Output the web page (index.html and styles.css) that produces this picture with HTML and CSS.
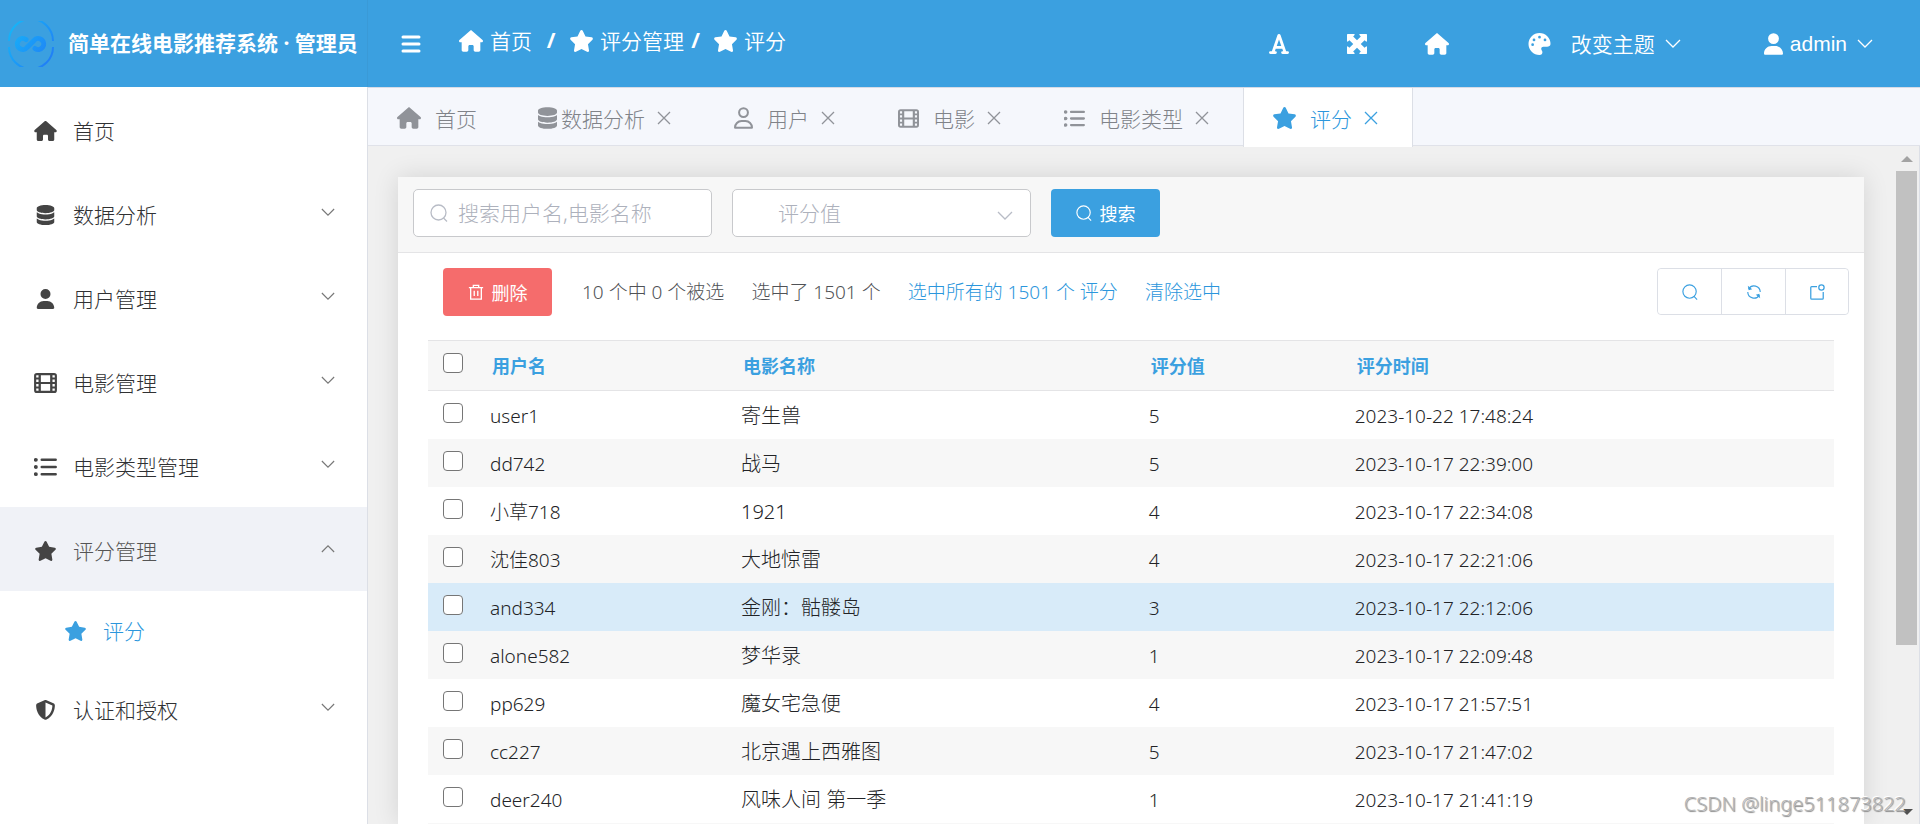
FILE: index.html
```html
<!DOCTYPE html>
<html lang="zh-CN">
<head>
<meta charset="utf-8">
<title>评分 | 简单在线电影推荐系统 · 管理员</title>
<link rel="stylesheet" href="styles.css">
</head>
<body>
<svg class="sprite" aria-hidden="true">
  <symbol id="house" viewBox="0 0 576 512"><path d="M575.8 255.5c0 18-15 32.1-32 32.1h-32l.7 160.2V472c0 22.1-17.9 40-40 40H392c-22.1 0-40-17.9-40-40V384c0-17.700-14.300-32-32-32H256c-17.700 0-32 14.300-32 32v88c0 22.100-17.900 40-40 40H104c-22.100 0-40-17.900-40-40V287.600H32c-18 0-32-14-32-32.100c0-9 3-17 10-24L266.400 8c7-7 15-8 22-8s15 2 21 7L564.800 231.500c8 7 12 15 11 24z"/></symbol>
  <symbol id="star" viewBox="24 0 528 512"><path d="M316.900 18C311.600 7 300.400 0 288.100 0s-23.400 7-28.800 18L195 150.300 51.400 171.500c-12 1.800-22 10.200-25.700 21.700s-.7 24.200 7.900 32.700L137.800 329 113.200 474.700c-2 12 3 24.200 12.900 31.300s23 8 33.800 2.300l128.300-68.500 128.300 68.500c10.800 5.700 23.900 4.900 33.800-2.300s14.900-19.300 12.900-31.300L438.500 329 542.700 225.900c8.600-8.500 11.700-21.200 7.900-32.700s-13.700-19.900-25.700-21.700L381.200 150.300 316.900 18z"/></symbol>
  <symbol id="database" viewBox="0 0 448 512"><path d="M448 80v48c0 44.200-100.300 80-224 80S0 172.200 0 128V80C0 35.800 100.300 0 224 0S448 35.800 448 80zM393.200 214.700c20.800-7.400 39.900-16.900 54.800-28.600V288c0 44.200-100.300 80-224 80S0 332.200 0 288V186.100c14.900 11.800 34 21.200 54.800 28.600C99.700 230.700 159.500 240 224 240s124.300-9.300 169.200-25.300zM0 346.100c14.900 11.800 34 21.200 54.800 28.600C99.700 390.700 159.500 400 224 400s124.300-9.300 169.200-25.300c20.800-7.400 39.900-16.900 54.800-28.600V432c0 44.200-100.300 80-224 80S0 476.200 0 432V346.100z"/></symbol>
  <symbol id="user" viewBox="0 0 448 512"><path d="M224 256A128 128 0 1 0 224 0a128 128 0 1 0 0 256zm-45.700 48C79.800 304 0 383.800 0 482.300C0 498.700 13.300 512 29.700 512H418.300c16.400 0 29.700-13.300 29.700-29.700C448 383.800 368.200 304 269.700 304H178.300z"/></symbol>
  <symbol id="user-line" viewBox="0 0 448 512"><g fill="none" stroke="currentColor" stroke-width="48"><circle cx="224" cy="128" r="104"/><path d="M24 482c0-86 68-154 154-154h92c86 0 154 68 154 154q0 6-6 6H30q-6 0-6-6z"/></g></symbol>
  <symbol id="film" viewBox="0 32 512 448"><path fill-rule="evenodd" d="M64 32h384a64 64 0 0 1 64 64v320a64 64 0 0 1-64 64H64a64 64 0 0 1-64-64V96a64 64 0 0 1 64-64zM48 88v44h52V80H56zM48 176v56h52v-56zM48 280v56h52v-56zM48 380v44l8 8h44v-52zM412 80v52h52V88l-8-8zM412 176v56h52v-56zM412 280v56h52v-56zM412 380v52h44l8-8v-44zM152 80v152h208V80zM152 280v152h208V280z"/></symbol>
  <symbol id="list" viewBox="0 32 512 448"><circle cx="40" cy="96" r="44"/><circle cx="40" cy="256" r="44"/><circle cx="40" cy="416" r="44"/><path stroke="currentColor" stroke-width="56" stroke-linecap="round" d="M172 96h312M172 256h312M172 416h312"/></symbol>
  <symbol id="shield" viewBox="0 0 512 512"><path fill-rule="evenodd" d="M269 3L457 82c22 9 39 31 39 58c-1 99-42 280-214 362q-26 12-52 0C58 420 17 239 16 140c0-27 17-49 39-58L243 3q13-5 26 0zM256 66v380c138-67 175-214 176-305z"/></symbol>
  <symbol id="font" viewBox="0 0 448 448"><path fill-rule="evenodd" d="M190 20q7-20 34-20t34 20l126 364h32a32 32 0 0 1 0 64H304a32 32 0 0 1 0-64h12l-18-52H150l-18 52h12a32 32 0 0 1 0 64H32a32 32 0 0 1 0-64h32zM173 268h102L224 122z"/></symbol>
  <symbol id="expand" viewBox="0 0 448 448"><path d="M16 0h142q22 4 12 22l-32 32 86 86 86-86-32-32q-10-18 12-22h142q16 0 16 16v142q-4 22-22 12l-32-32-86 86 86 86 32-32q18-10 22 12v142q0 16-16 16H290q-22-4-12-22l32-32-86-86-86 86 32 32q10 18-12 22H16q-16 0-16-16V290q4-22 22-12l32 32 86-86-86-86-32 32q-18 10-22-12V16Q0 0 16 0z"/></symbol>
  <symbol id="palette" viewBox="0 0 512 512"><path fill-rule="evenodd" d="M512 256c0 42-38 64-80 64h-88c-26 0-48 22-48 48c0 32 28 48 28 80c0 36-22 64-68 64a256 256 0 1 1 256-256zM128 272a32 32 0 1 0-64 0 32 32 0 1 0 64 0zM160 160a32 32 0 1 0-64 0 32 32 0 1 0 64 0zM288 96a32 32 0 1 0-64 0 32 32 0 1 0 64 0zM416 160a32 32 0 1 0-64 0 32 32 0 1 0 64 0z"/></symbol>
  <symbol id="bars" viewBox="0 0 20 18"><path stroke="currentColor" stroke-width="3" stroke-linecap="round" d="M2 2h16M2 9h16M2 16h16"/></symbol>
  <symbol id="down" viewBox="0 0 16 10"><path fill="none" stroke="currentColor" stroke-width="1.300" d="M1 1l7 7 7-7"/></symbol>
  <symbol id="close" viewBox="0 0 18 18"><path fill="none" stroke="currentColor" stroke-width="1.300" d="M3 3l12 12M15 3L3 15"/></symbol>
  <symbol id="search" viewBox="0 0 18 18"><g fill="none" stroke="currentColor" stroke-width="1.300"><circle cx="8.500" cy="8.500" r="7.500"/><path d="M13.500 14l3.500 3.500"/></g></symbol>
  <symbol id="trash" viewBox="0 0 18 18"><path fill="none" stroke="currentColor" stroke-width="1.500" d="M1 4h16M3 4v13h12V4M6 4V1.500h6V4M7 7.500v6M11 7.500v6"/></symbol>
  <symbol id="refresh" viewBox="0 0 18 18"><path fill="none" stroke="currentColor" stroke-width="1.300" d="M3 5.500A7 7 0 0 1 16 9M2 9a7 7 0 0 0 13 3.500"/><path d="M2 2l1 5 4-1zM16 16l-1-5-4 1z"/></symbol>
  <symbol id="notify" viewBox="0 0 18 18"><g fill="none" stroke="currentColor" stroke-width="1.400"><path d="M9 3H3q-1 0-1 1v12q0 1 1 1h12q1 0 1-1V9"/><circle cx="14" cy="4" r="3"/></g></symbol>
</svg>

<div class="app">
  <header class="header">
    <div class="brand">
      <svg class="logo" viewBox="0 0 46 46" aria-hidden="true">
        <defs><linearGradient id="lg" gradientUnits="userSpaceOnUse" x1="2" y1="8" x2="42" y2="38"><stop offset="0" stop-color="#16b4f8"/><stop offset="1" stop-color="#2080f6"/></linearGradient></defs>
        <g fill="none" stroke="url(#lg)">
          <path stroke-width="2" d="M1 20a22 22 0 0 1 44 0M1 26a22 22 0 0 0 44 0"/>
          <path stroke-width="5" stroke-linecap="round" d="M18 18.500a5.500 5.500 0 1 0 1 8l7-7a5.500 5.500 0 1 1 1 8"/>
        </g>
      </svg>
      <h1 class="brand-name">简单在线电影推荐系统 · 管理员</h1>
    </div>
    <button class="icon-btn menu-btn" type="button" aria-label="菜单"><svg class="i-bars"><use href="#bars"/></svg></button>
    <nav class="crumbs" aria-label="breadcrumb">
      <a href="#"><svg class="i-house"><use href="#house"/></svg><span>首页</span></a>
      <span class="slash wide">/</span>
      <a href="#"><svg class="i-star"><use href="#star"/></svg><span>评分管理</span></a>
      <span class="slash">/</span>
      <a href="#"><svg class="i-star"><use href="#star"/></svg><span>评分</span></a>
    </nav>
    <div class="tools">
      <button class="icon-btn" type="button" aria-label="字体"><svg class="i-sq"><use href="#font"/></svg></button>
      <button class="icon-btn" type="button" aria-label="全屏"><svg class="i-sq"><use href="#expand"/></svg></button>
      <button class="icon-btn" type="button" aria-label="主页"><svg class="i-house"><use href="#house"/></svg></button>
      <button class="icon-btn theme" type="button"><svg class="i-star"><use href="#palette"/></svg><span>改变主题</span><svg class="i-down"><use href="#down"/></svg></button>
      <button class="icon-btn account" type="button"><svg class="i-user"><use href="#user"/></svg><span>admin</span><svg class="i-down"><use href="#down"/></svg></button>
    </div>
  </header>

  <div class="body">
    <nav class="sidebar">
      <a class="item" href="#"><svg class="i-side"><use href="#house"/></svg><span>首页</span></a>
      <a class="item" href="#"><svg class="i-side"><use href="#database"/></svg><span>数据分析</span><svg class="i-caret"><use href="#down"/></svg></a>
      <a class="item" href="#"><svg class="i-side"><use href="#user"/></svg><span>用户管理</span><svg class="i-caret"><use href="#down"/></svg></a>
      <a class="item" href="#"><svg class="i-side"><use href="#film"/></svg><span>电影管理</span><svg class="i-caret"><use href="#down"/></svg></a>
      <a class="item" href="#"><svg class="i-side"><use href="#list"/></svg><span>电影类型管理</span><svg class="i-caret"><use href="#down"/></svg></a>
      <a class="item open" href="#"><svg class="i-side"><use href="#star"/></svg><span>评分管理</span><svg class="i-caret"><use href="#down"/></svg></a>
      <a class="item sub" href="#"><svg class="i-side"><use href="#star"/></svg><span>评分</span></a>
      <a class="item" href="#"><svg class="i-side"><use href="#shield"/></svg><span>认证和授权</span><svg class="i-caret"><use href="#down"/></svg></a>
    </nav>

    <main class="main">
      <div class="tabs">
        <a class="tab" href="#"><svg class="i-house"><use href="#house"/></svg><span>首页</span></a>
        <a class="tab tight" href="#"><svg class="i-user"><use href="#database"/></svg><span>数据分析</span><svg class="i-close"><use href="#close"/></svg></a>
        <a class="tab" href="#"><svg class="i-user"><use href="#user-line"/></svg><span>用户</span><svg class="i-close"><use href="#close"/></svg></a>
        <a class="tab" href="#"><svg class="i-film"><use href="#film"/></svg><span>电影</span><svg class="i-close"><use href="#close"/></svg></a>
        <a class="tab" href="#"><svg class="i-film"><use href="#list"/></svg><span>电影类型</span><svg class="i-close"><use href="#close"/></svg></a>
        <a class="tab active" href="#"><svg class="i-star"><use href="#star"/></svg><span>评分</span><svg class="i-close"><use href="#close"/></svg></a>
      </div>

      <div class="pane">
        <section class="card">
          <form class="filters">
            <label class="field search-field"><svg class="i-search"><use href="#search"/></svg><input type="text" aria-label="搜索" placeholder="搜索用户名,电影名称"></label>
            <label class="field select-field"><select aria-label="评分值"><option>评分值</option></select><svg class="i-down"><use href="#down"/></svg></label>
            <button class="btn primary" type="button"><svg class="i-btn"><use href="#search"/></svg>搜索</button>
          </form>

          <div class="actions">
            <button class="btn danger" type="button"><svg class="i-btn"><use href="#trash"/></svg>删除</button>
            <span>10 个中 0 个被选</span>
            <span>选中了 1501 个</span>
            <a href="#">选中所有的 1501 个 评分</a>
            <a href="#">清除选中</a>
            <div class="group">
              <button type="button" aria-label="搜索"><svg class="i-btn"><use href="#search"/></svg></button>
              <button type="button" aria-label="刷新"><svg class="i-btn"><use href="#refresh"/></svg></button>
              <button type="button" aria-label="打开"><svg class="i-btn"><use href="#notify"/></svg></button>
            </div>
          </div>

          <div class="table-wrap">
            <table>
              <colgroup><col class="c-check"><col class="c-user"><col class="c-movie"><col class="c-score"><col></colgroup>
              <thead><tr><th><input type="checkbox" aria-label="全选"></th><th>用户名</th><th>电影名称</th><th>评分值</th><th>评分时间</th></tr></thead>
              <tbody>
                <tr><td><input type="checkbox" aria-label="user1"></td><td>user1</td><td>寄生兽</td><td>5</td><td>2023-10-22 17:48:24</td></tr>
                <tr><td><input type="checkbox" aria-label="dd742"></td><td>dd742</td><td>战马</td><td>5</td><td>2023-10-17 22:39:00</td></tr>
                <tr><td><input type="checkbox" aria-label="小草718"></td><td>小草718</td><td>1921</td><td>4</td><td>2023-10-17 22:34:08</td></tr>
                <tr><td><input type="checkbox" aria-label="沈佳803"></td><td>沈佳803</td><td>大地惊雷</td><td>4</td><td>2023-10-17 22:21:06</td></tr>
                <tr class="hover"><td><input type="checkbox" aria-label="and334"></td><td>and334</td><td>金刚：骷髅岛</td><td>3</td><td>2023-10-17 22:12:06</td></tr>
                <tr><td><input type="checkbox" aria-label="alone582"></td><td>alone582</td><td>梦华录</td><td>1</td><td>2023-10-17 22:09:48</td></tr>
                <tr><td><input type="checkbox" aria-label="pp629"></td><td>pp629</td><td>魔女宅急便</td><td>4</td><td>2023-10-17 21:57:51</td></tr>
                <tr><td><input type="checkbox" aria-label="cc227"></td><td>cc227</td><td>北京遇上西雅图</td><td>5</td><td>2023-10-17 21:47:02</td></tr>
                <tr><td><input type="checkbox" aria-label="deer240"></td><td>deer240</td><td>风味人间 第一季</td><td>1</td><td>2023-10-17 21:41:19</td></tr>
                <tr><td></td><td></td><td></td><td></td><td></td></tr>
              </tbody>
            </table>
          </div>
        </section>
        <div class="scrollbar" aria-hidden="true">
          <span class="arrow up"></span>
          <span class="thumb"></span>
          <span class="arrow down"></span>
        </div>
      </div>
    </main>
  </div>
  <p class="watermark">CSDN @linge511873822</p>
</div>
</body>
</html>
```
FILE: styles.css
```css
* { box-sizing: border-box; }
body {
  margin: 0;
  font-family: "Noto Sans", "Noto Sans CJK SC", sans-serif;
  font-size: 19px;
  font-weight: 300;
  color: #222326;
}
a { color: inherit; text-decoration: none; }
button, input, select { font: inherit; color: inherit; }
svg { fill: currentColor; flex: none; display: block; }
.sprite { position: absolute; width: 0; height: 0; }

.i-house { width: 24px; height: 22px; }
.i-star { width: 23px; height: 22px; }
.i-user { width: 19px; height: 22px; }
.i-film { width: 21px; height: 19px; }
.i-sq { width: 20px; height: 20px; }
.i-side { width: 23px; height: 20px; }
.i-bars { width: 20px; height: 18px; }
.i-down { width: 16px; height: 10px; }
.i-caret { width: 14px; height: 9px; margin-left: auto; }
.i-close { width: 18px; height: 18px; }
.i-search { width: 18px; height: 18px; }
.i-btn { width: 16px; height: 16px; }

.app { position: relative; height: 100vh; display: flex; flex-direction: column; overflow: hidden; }

.header { display: flex; align-items: center; flex: none; height: 87px; background: #3ba0e0; color: #fff; font-size: 21px; font-weight: 350; }
.brand { width: 368px; height: 100%; flex: none; display: flex; align-items: center; gap: 14px; padding-left: 8px; border-right: 1px solid #3a9ad7; }
.logo { width: 46px; height: 46px; }
.brand-name { margin: 0; padding-bottom: 3px; font-size: 21px; font-weight: 700; white-space: nowrap; }
.icon-btn { display: flex; align-items: center; padding: 0; border: 0; background: none; cursor: pointer; }
.menu-btn { margin: 0 38px 0 33px; }
.crumbs { display: flex; align-items: center; padding-bottom: 6px; }
.crumbs a { display: flex; align-items: center; gap: 7px; }
.crumbs span { padding-bottom: 2px; }
.crumbs .slash { width: 30px; text-align: center; font-weight: 700; padding-right: 7px; }
.crumbs .wide { width: 38px; padding-right: 0; }
.tools { display: flex; align-items: center; margin-left: auto; padding-right: 47px; }
.tools .icon-btn { margin-left: 58px; }
.tools .theme { margin-left: 79px; gap: 10px; }
.theme span { padding: 0 0 2px 10px; }
.tools .account { margin-left: 83px; gap: 10px; font-family: "Liberation Sans", sans-serif; font-weight: 400; }
.account span { margin-left: -3px; }

.body { flex: 1; min-height: 0; display: flex; }
.sidebar { width: 368px; flex: none; background: #fff; border-right: 1px solid #dcdfe6; font-size: 21px; color: #444; }
.item { display: flex; align-items: center; height: 84px; padding: 4px 32px 0 34px; }
.item span { margin-left: 16px; padding-bottom: 2px; color: #303133; }
.item .i-caret { color: #777; margin-bottom: 6px; }
.item.open { background: #f0f2f7; }
.item.open span { color: #555; }
.item.open .i-caret { transform: rotate(180deg); }
.item.sub { height: 75px; padding-left: 64px; color: #3ba0e0; }
.item.sub span { color: #2b96dc; }

.main { flex: 1; min-width: 0; display: flex; flex-direction: column; }
.tabs { flex: none; display: flex; height: 59px; background: #f5f7fc; border-top: 1px solid #d6dbe6; border-bottom: 1px solid #e0e2e9; color: #909399; font-size: 21px; }
.tab { display: flex; align-items: center; padding: 3px 32px 0 29px; }
.tab span { margin-left: 14px; padding-bottom: 1px; color: #808389; }
.tab.tight span { margin-left: 4px; }
.tab .i-close { margin-left: 10px; }
.tab.active { margin-bottom: -2px; padding-bottom: 2px; background: #fff; color: #3ba0e0; border: solid #dcdfe6; border-width: 0 1px; z-index: 1; }
.tab.active span { color: #2b96dc; }

.pane { flex: 1; min-height: 0; display: flex; background: #f0f0f0; padding-left: 30px; border-right: 1px solid #dcdfe6; overflow: hidden; }
.card { flex: 1; min-width: 0; margin: 31px 32px 0 0; background: #fff; box-shadow: 0 0 24px rgba(0, 0, 0, 0.12); }
.filters { display: flex; gap: 20px; height: 76px; padding: 12px 15px; background: #f7f7f7; border-bottom: 1px solid #e4e4e6; font-size: 21px; }
.field { display: flex; align-items: center; width: 299px; height: 48px; background: #fff; border: 1px solid #c8c9cc; border-radius: 5px; color: #b8bcc6; }
.search-field { padding-left: 16px; gap: 10px; }
.field input { flex: 1; min-width: 0; height: 44px; padding: 0; border: 0; background: none; outline: 0; color: #606266; }
.field input::placeholder { color: #adb1bc; opacity: 1; }
.select-field { padding: 0 17px 0 45px; }
.select-field svg { margin-top: 5px; }
.field select { flex: 1; height: 44px; padding: 0; border: 0; background: none; appearance: none; outline: 0; color: #adb1bc; }
.btn { display: flex; align-items: center; justify-content: center; gap: 8px; width: 109px; height: 48px; border: 0; border-radius: 4px; color: #fff; font-size: 18px; font-weight: 400; }
.primary { background: #3ba0e0; }
.danger { background: #f56c6c; margin-right: 3px; }

.actions { display: flex; align-items: center; gap: 27px; padding: 15px 15px 0 45px; color: #505256; white-space: nowrap; }
.actions a { color: #2b96dc; }
.actions > span, .actions > a { padding-bottom: 2px; }
.group { display: flex; align-self: flex-start; margin-left: auto; border: 1px solid #dcdfe6; border-radius: 4px; height: 47px; }
.group button { display: grid; place-items: center; width: 63px; padding: 0; border: 0; background: #fff; border-radius: 4px; color: #3ba0e0; }
.group button + button { width: 64px; border-left: 1px solid #dcdfe6; border-radius: 0 4px 4px 0; }
.group button:last-child { width: 63px; }

.table-wrap { padding: 24px 30px 0; }
table { width: 100%; table-layout: fixed; border-collapse: separate; border-spacing: 0; }
.c-check { width: 47px; }
.c-user { width: 251px; }
.c-movie { width: 29%; }
.c-score { width: 206px; }
th { height: 51px; padding: 0 17px 2px; text-align: left; background: #f7f7f7; border: solid #e4e4e6; border-width: 1px 0; font-size: 18px; font-weight: 700; color: #3ba0e0; }
td { height: 48px; padding: 2px 15px 0; line-height: 28px; }
th:first-child, td:first-child { padding: 12px 15px 0; vertical-align: top; line-height: 0; }
td:nth-child(3) { font-size: 20px; }
tbody tr:nth-child(even) { background: #f7f7f7; }
tbody tr.hover { background: #d8ebf9; }
input[type="checkbox"] { width: 20px; height: 20px; margin: 0; appearance: none; background: #fff; border: 1px solid #767676; border-radius: 4px; }

.scrollbar { width: 23px; flex: none; display: flex; flex-direction: column; align-items: flex-start; padding: 10px 0 9px; }
.arrow { border: 6px solid transparent; border-top-width: 0; border-bottom-width: 0; margin-left: 5px; }
.arrow.up { border-bottom: 6px solid #a3a3a3; }
.arrow.down { border-top: 6px solid #505050; margin-top: auto; }
.thumb { width: 21px; height: 72%; margin-top: 9px; background: #c1c1c1; }
.watermark { position: absolute; right: 14px; bottom: 6px; margin: 0; font-size: 20px; line-height: 28px; color: #b4b4b4; text-shadow: 1px 1px 1px #888, -1px -1px 0 #fff; }
```
